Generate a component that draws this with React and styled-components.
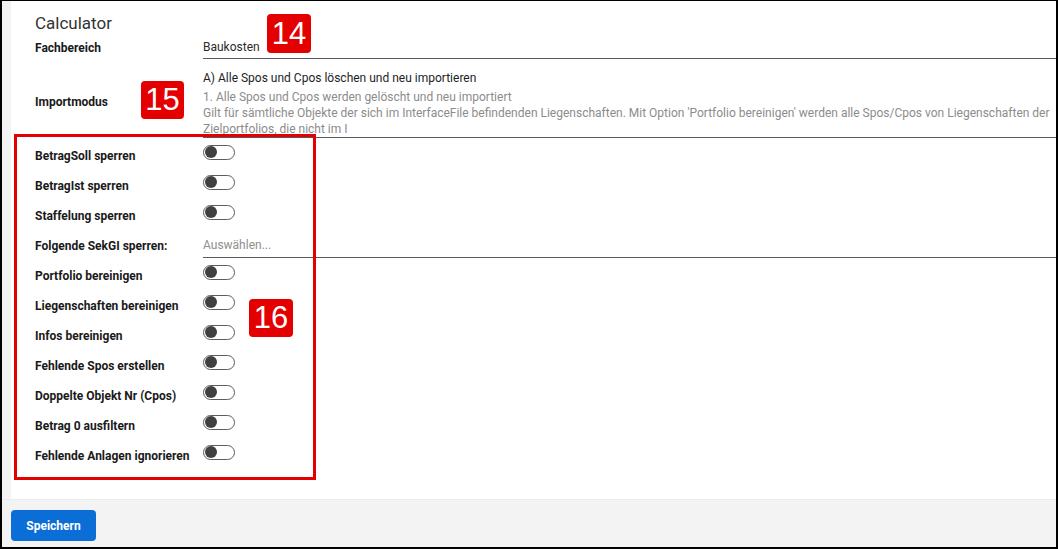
import styled, { createGlobalStyle } from "styled-components"

const GlobalStyle = createGlobalStyle`
    html, body {
        margin: 0;
        padding: 0;
        background: #ffffff;
    }
    * {
        box-sizing: border-box;
    }
`

const importLines = [
    "1. Alle Spos und Cpos werden gelöscht und neu importiert",
    "Gilt für sämtliche Objekte der sich im InterfaceFile befindenden Liegenschaften. Mit Option 'Portfolio bereinigen' werden alle Spos/Cpos von Liegenschaften der",
    "Zielportfolios, die nicht im I",
]

const options = [
    { label: "BetragSoll sperren", kind: "toggle" },
    { label: "BetragIst sperren", kind: "toggle" },
    { label: "Staffelung sperren", kind: "toggle" },
    { label: "Folgende SekGI sperren:", kind: "select" },
    { label: "Portfolio bereinigen", kind: "toggle" },
    { label: "Liegenschaften bereinigen", kind: "toggle" },
    { label: "Infos bereinigen", kind: "toggle" },
    { label: "Fehlende Spos erstellen", kind: "toggle" },
    { label: "Doppelte Objekt Nr (Cpos)", kind: "toggle" },
    { label: "Betrag 0 ausfiltern", kind: "toggle" },
    { label: "Fehlende Anlagen ignorieren", kind: "toggle" },
]

export default function App() {
    return (
        <>
            <GlobalStyle />
            <Frame>
                <Panel>
                    <Title>Calculator</Title>

                    <FieldRow>
                        <Label>Fachbereich</Label>
                        <ValueCell>Baukosten</ValueCell>
                    </FieldRow>

                    <FieldRow>
                        <Label $shift={6}>Importmodus</Label>
                        <ImportCell>
                            <ImportTitle>A) Alle Spos und Cpos löschen und neu importieren</ImportTitle>
                            {importLines.map(line => (
                                <HintLine key={line}>{line}</HintLine>
                            ))}
                        </ImportCell>
                    </FieldRow>

                    <OptionList>
                        {options.map(opt => (
                            <OptionRow key={opt.label}>
                                <Label>{opt.label}</Label>
                                {opt.kind === "toggle" ? (
                                    <Track>
                                        <Knob />
                                    </Track>
                                ) : (
                                    <SelectField>Auswählen...</SelectField>
                                )}
                            </OptionRow>
                        ))}
                    </OptionList>
                </Panel>

                <Footer>
                    <SaveButton>Speichern</SaveButton>
                </Footer>

                <Marker $left={265} $top={13} $w={44} $h={39}>14</Marker>
                <Marker $left={139} $top={80} $w={43} $h={38}>15</Marker>
                <Marker $left={247} $top={298} $w={44} $h={38}>16</Marker>
                <Highlight />
            </Frame>
        </>
    )
}

const Frame = styled.div`
    position: relative;
    width: 1058px;
    height: 549px;
    border: 2px solid #000;
    border-top-width: 1px;
    background-color: #f3f3f3;
    display: flex;
    flex-direction: column;
    font-family: 'Roboto', 'Liberation Sans', sans-serif;
    color: #1d1d1d;
    overflow: hidden;
`
const Panel = styled.div`
    margin-left: 9px;
    background-color: #fff;
    padding: 12px 0 28px 24px;
    display: flex;
    flex-direction: column;
`
const Title = styled.div`
    font-size: 17px;
    line-height: 20px;
    color: #333;
    margin-bottom: 3px;
`
const FieldRow = styled.div`
    display: grid;
    grid-template-columns: 168px 1fr;
    align-items: center;
`
const Label = styled.div`
    font-size: 12px;
    font-weight: 700;
    line-height: 16px;
    color: #1a1a1a;
    white-space: nowrap;
    padding-top: ${p => p.$shift || 0}px;
`
const ValueCell = styled.div`
    height: 23px;
    line-height: 22px;
    font-size: 12px;
    color: #2a2a2a;
    border-bottom: 1px solid #5a5a5a;
`
const ImportCell = styled.div`
    padding-top: 10px;
    height: 79px;
    border-bottom: 1px solid #5a5a5a;
    font-size: 12px;
`
const ImportTitle = styled.div`
    line-height: 18px;
    color: #1e1e1e;
    margin-bottom: 2px;
`
const HintLine = styled.div`
    line-height: 16px;
    color: #8c8c8c;
    white-space: nowrap;
`
const OptionList = styled.div`
    padding-top: 3px;
    display: flex;
    flex-direction: column;
`
const OptionRow = styled.div`
    display: grid;
    grid-template-columns: 168px 1fr;
    align-items: center;
    height: 30px;
`
const Track = styled.div`
    width: 32px;
    height: 15px;
    margin-bottom: 8px;
    border: 1.5px solid #5c5c5c;
    border-radius: 8px;
    background-color: #fff;
    display: flex;
    align-items: center;
    padding-left: 1px;
`
const Knob = styled.div`
    width: 12px;
    height: 12px;
    border-radius: 50%;
    background-color: #404040;
`
const SelectField = styled.div`
    align-self: start;
    height: 27px;
    line-height: 28px;
    font-size: 12px;
    color: #8f8f8f;
    border-bottom: 1px solid #5a5a5a;
`
const Footer = styled.div`
    flex: 1;
    border-top: 1px solid #ececec;
    padding: 10px 0 0 9px;
`
const SaveButton = styled.button`
    width: 85px;
    height: 31px;
    border: none;
    border-radius: 4px;
    background-color: #0a6ed6;
    color: #fff;
    font-family: 'Roboto', 'Liberation Sans', sans-serif;
    font-size: 12px;
    font-weight: 700;
    cursor: pointer;
`
const Marker = styled.div`
    position: absolute;
    left: ${p => p.$left}px;
    top: ${p => p.$top}px;
    width: ${p => p.$w}px;
    height: ${p => p.$h}px;
    border-radius: 4px;
    background-color: #e40000;
    color: #fff;
    font-family: 'Liberation Sans', Arial, sans-serif;
    font-size: 31px;
    display: flex;
    align-items: center;
    justify-content: center;
`
const Highlight = styled.div`
    position: absolute;
    left: 12px;
    top: 133px;
    width: 302px;
    height: 346px;
    border: 3px solid #e40000;
    pointer-events: none;
`
